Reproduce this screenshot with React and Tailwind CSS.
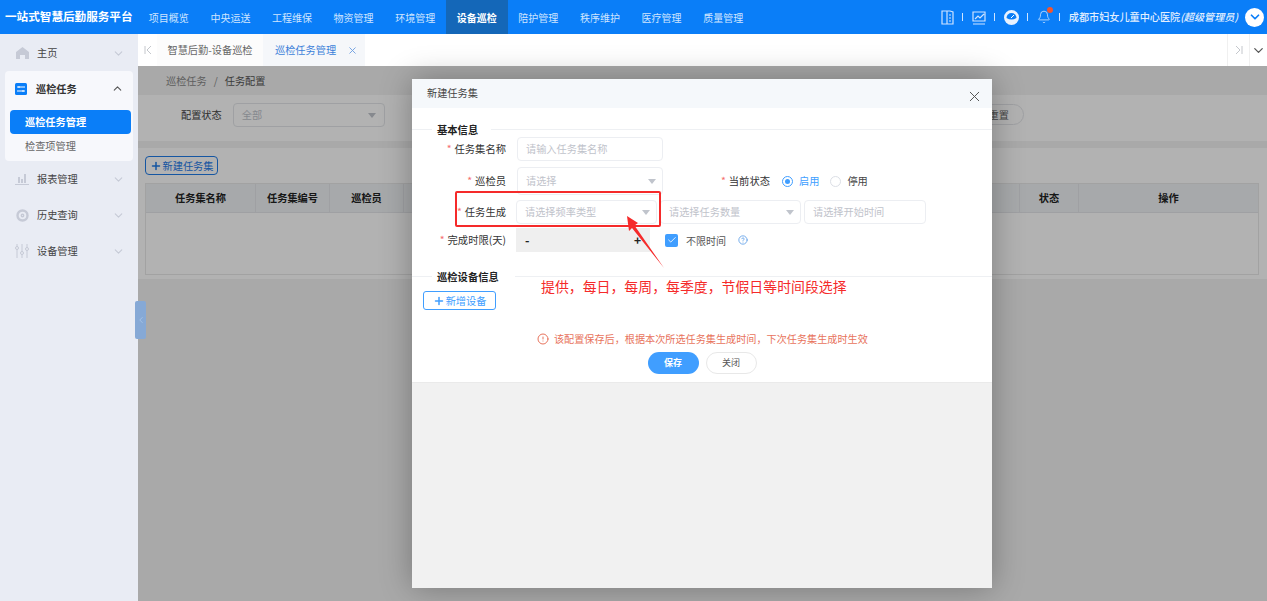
import { ChevronDown, ChevronUp, ChevronLeft, X, Plus, Check, CircleHelp, CircleAlert, Bell } from 'lucide-react';

const navItems = ['项目概览', '中央运送', '工程维保', '物资管理', '环境管理', '设备巡检', '陪护管理', '秩序维护', '医疗管理', '质量管理'];

const Caret = () => <span className="w-0 h-0 border-x-[4px] border-x-transparent border-t-[5px] border-t-[#c0c4cc]" />;

const Sep = () => <span className="ml-[8px] mr-[9px] w-px h-[8px] bg-[#cfe5ff]" />;

const Label = ({ children, w = 'w-[94px]' }) => (
    <div className={`${w} shrink-0 text-right text-[10.3px] text-[#333] whitespace-nowrap`}>
        <span className="text-[#f56c6c] mr-[3px]">*</span>
        {children}
    </div>
);

const Field = ({ text, w, caret, h = 'h-[24px]' }) => (
    <div className={`${w} ${h} flex items-center justify-between pl-2 pr-[6px] bg-white border border-[#eceef2] rounded-sm text-[10.2px] text-[#bfc3cb]`}>
        <span>{text}</span>
        {caret && <Caret />}
    </div>
);

const SideItem = ({ icon, text }) => (
    <div className="h-[36px] flex items-center pl-[15px] pr-[13px] text-[10.2px] text-[#444]">
        <span className="w-[14px] h-[14px] flex items-center justify-center text-[#c6cad6]">{icon}</span>
        <span className="ml-[8px] flex-1">{text}</span>
        <ChevronDown size={13} className="text-[#c6cad6]" />
    </div>
);

const Section = ({ title, w }) => (
    <div className="flex items-center h-[15px]">
        <div className="w-[20px] h-px bg-[#eef0f3]" />
        <div className={`${w} pl-[5px] text-[10.3px] font-bold text-[#222]`}>{title}</div>
        <div className="flex-1 h-px bg-[#eef0f3]" />
    </div>
);

export default function App() {
    return (
        <div className="relative w-[1267px] h-[601px] overflow-hidden bg-white font-['Noto_Sans_CJK_SC','Liberation_Sans',sans-serif]">
            <div className="h-[34px] bg-[#0a7ef8] flex items-center text-white">
                <div className="w-[138px] pl-[5px] text-[11.6px] font-bold whitespace-nowrap">一站式智慧后勤服务平台</div>
                <div className="flex h-full">
                    {navItems.map((item) => (
                        <div key={item} className={`w-[61.6px] flex items-center justify-center text-[10px] ${item === '设备巡检' ? 'bg-[#1467b8] font-bold' : 'text-[#cfe5ff]'}`}>{item}</div>
                    ))}
                </div>
                <div className="ml-auto flex items-center pr-[3px]">
                    <svg width="13" height="15" viewBox="0 0 13 15" fill="none" stroke="#cfe3ff" strokeWidth="1.2"><path d="M1 1h8l3 1v12H1zM6 1v13M8 5h2M8 8h2M8 11h2" /></svg>
                    <Sep />
                    <svg width="14" height="15" viewBox="0 0 14 15" fill="none" stroke="#cfe3ff" strokeWidth="1.2"><path d="M1 2h12v9H1zM1 14h12M3 9l3-3 2 2 4-4" /></svg>
                    <Sep />
                    <svg width="15" height="15" viewBox="0 0 15 15"><circle cx="7.5" cy="7.5" r="7.5" fill="#e8f2ff" /><path d="M2.5 8a5 5 0 1 1 10 0q-5 3 -10 0z" fill="#0a7ef8" /><path d="M7 8l3-3" stroke="#fff" /></svg>
                    <Sep />
                    <span className="relative">
                        <Bell size={14} strokeWidth={1.3} className="text-[#dbeafe]" />
                        <span className="absolute -top-[3px] -right-[2px] w-[6px] h-[6px] rounded-full bg-[#f4552c]" />
                    </span>
                    <Sep />
                    <span className="text-[10.15px] font-medium text-[#e2efff] whitespace-nowrap">成都市妇女儿童中心医院<i>(超级管理员)</i></span>
                    <span className="ml-[7px] w-[19px] h-[19px] rounded-full bg-white flex items-center justify-center">
                        <ChevronDown size={14} strokeWidth={3} className="text-[#0a7ef8]" />
                    </span>
                </div>
            </div>
            <div className="flex h-[567px]">
                <aside className="w-[138px] shrink-0 bg-[#e9ecf4] pt-px">
                    <SideItem text="主页" icon={<svg width="13" height="12" viewBox="0 0 13 12" fill="currentColor"><path d="M6.5 0L13 5v7H9V8H4v4H0V5z" /></svg>} />
                    <div className="ml-[5px] mr-[5px] bg-[#f7f8fc] rounded-sm h-[90px]">
                        <div className="h-[35px] flex items-center pl-[10px] pr-[9px] text-[10.2px] font-bold text-[#333]">
                            <svg width="12" height="12" viewBox="0 0 12 12"><rect width="12" height="12" rx="1.5" fill="#0a7ef8" /><path d="M2 4h8M2 8h8" stroke="#fff" /><path d="M4 3v2M8 7v2" stroke="#fff" /></svg>
                            <span className="ml-[9px] flex-1">巡检任务</span>
                            <ChevronUp size={13} className="text-[#555]" />
                        </div>
                        <div className="mt-[4px] ml-[5px] mr-[2px] h-[24px] bg-[#0a7ef8] rounded-sm flex items-center pl-[15px] text-[10.2px] font-bold text-white">巡检任务管理</div>
                        <div className="h-[23px] flex items-center pl-[20px] text-[10.2px] text-[#666]">检查项管理</div>
                    </div>
                    <SideItem text="报表管理" icon={<svg width="14" height="13" viewBox="0 0 14 13" fill="currentColor"><path d="M3 4h2v6H3zM6 6h2v4H6zM9 1h2v9H9zM0 11h14v1H0z" /></svg>} />
                    <SideItem text="历史查询" icon={<svg width="13" height="13" viewBox="0 0 13 13" fill="none" stroke="currentColor" strokeWidth="2.4"><circle cx="6.5" cy="6.5" r="5" /><circle cx="6.5" cy="6.5" r="1.2" strokeWidth="1.4" /></svg>} />
                    <SideItem text="设备管理" icon={<svg width="14" height="14" viewBox="0 0 14 14" fill="none" stroke="currentColor"><path d="M2 0v14M7 0v14M12 0v14" /><circle cx="2" cy="4" r="1.5" fill="#e9ecf4" /><circle cx="7" cy="9" r="1.5" fill="#e9ecf4" /><circle cx="12" cy="5" r="1.5" fill="#e9ecf4" /></svg>} />
                </aside>
                <main className="flex-1 flex flex-col min-w-0">
                    <div className="h-[32px] flex items-center bg-white text-[10.2px] shrink-0">
                        <div className="w-[19px] h-full flex items-center justify-center">
                            <svg width="8" height="8" viewBox="0 0 8 8" fill="none" stroke="#c4c7cc"><path d="M1 0v8M7 0L3 4l4 4" /></svg>
                        </div>
                        <div className="w-[106px] h-full bg-[#fcfcfc] flex items-center justify-center text-[#666]">智慧后勤-设备巡检</div>
                        <div className="w-[102px] h-full bg-[#f5f7fa] flex items-center pl-[12px] gap-[11px] text-[#3b7fd9]">巡检任务管理<X size={11} className="text-[#6f9fe0]" /></div>
                        <div className="ml-auto w-[22px] h-full border-l border-[#f0f0f0] flex items-center justify-center">
                            <svg width="8" height="8" viewBox="0 0 8 8" fill="none" stroke="#c4c7cc"><path d="M7 0v8M1 0l4 4-4 4" /></svg>
                        </div>
                        <div className="w-[18px] h-full border-l border-[#f0f0f0] flex items-center justify-center"><ChevronDown size={15} className="text-[#555]" /></div>
                    </div>
                    <div className="flex-1 bg-[#f2f2f2]">
                        <div className="h-[29px] flex items-center pl-[28px] text-[10.2px] text-[#888] gap-[7px]">巡检任务<span>/</span><span className="text-[#555]">任务配置</span></div>
                        <div className="h-[46px] bg-white flex items-start pt-[8px] pl-[43px] text-[10.2px] text-[#444]">
                            <span className="leading-[24px]">配置状态</span>
                            <div className="ml-[11px] w-[152px] h-[24px] border border-[#e4e6ea] rounded-sm flex items-center justify-between px-2 text-[#c0c4cc]">全部<Caret /></div>
                            <div className="ml-[589px] mt-px w-[50px] h-[21px] border border-[#e4e6ea] rounded-full flex items-center justify-center text-[#666]">重置</div>
                        </div>
                        <div className="h-[7px]" />
                        <div className="bg-white h-[131px] pl-[7px] pr-[8px] pt-[8px]">
                            <div className="w-[73px] h-[19px] border border-[#1f7be8] rounded-[4px] flex items-center justify-center gap-px text-[10.2px] text-[#1f7be8]"><Plus size={12} strokeWidth={3} />新建任务集</div>
                            <div className="mt-[8px] border border-[#e8e8e8] h-[92px]">
                                <div className="h-[29px] bg-[#eff2f5] border-b border-[#e4e6ea] flex text-[10.2px] font-bold text-[#222]">
                                    <div className="w-[110px] flex items-center justify-center border-r border-[#e4e6ea]">任务集名称</div>
                                    <div className="w-[74px] flex items-center justify-center border-r border-[#e4e6ea]">任务集编号</div>
                                    <div className="w-[74px] flex items-center justify-center border-r border-[#e4e6ea]">巡检员</div>
                                    <div className="flex-1 border-r border-[#e4e6ea]" />
                                    <div className="w-[59px] flex items-center justify-center border-r border-[#e4e6ea]">状态</div>
                                    <div className="w-[179px] flex items-center justify-center">操作</div>
                                </div>
                            </div>
                        </div>
                    </div>
                </main>
            </div>

            {/* 遮罩 */}
            <div className="absolute left-[138px] right-0 top-[66px] bottom-0 bg-black/30" />
            <div className="absolute left-[135px] top-[301px] w-[11px] h-[38px] bg-[#86a9d6] rounded-[2px] flex items-center justify-center"><ChevronLeft size={10} className="text-[#a9c6e8]" /></div>

            {/* 弹窗 */}
            <div className="absolute left-[412px] top-[79px] w-[580px] h-[509px] bg-[#f1f1f1] shadow-[0_0_30px_rgba(0,0,0,0.3)] flex flex-col">
                <div className="h-[29px] shrink-0 bg-[#f5f8fb] flex items-center justify-between pl-[15px] pr-[9px] text-[10.2px] text-[#444]">
                    <span className="-mt-[2px]">新建任务集</span>
                    <X size={17} strokeWidth={1.4} className="text-[#555] mt-[6px]" />
                </div>
                <div className="h-[275px] shrink-0 bg-white flex flex-col border-b border-[#eaeaea]">
                    <div className="pt-[14px]"><Section title="基本信息" w="w-[59px]" /></div>
                    <div className="flex items-center h-[24px]">
                        <Label>任务集名称</Label>
                        <div className="ml-[11px]"><Field w="w-[146px]" text="请输入任务集名称" /></div>
                    </div>
                    <div className="flex items-center mt-[6px] h-[28px]">
                        <Label>巡检员</Label>
                        <div className="ml-[11px]"><Field w="w-[146px]" h="h-[28px]" text="请选择" caret /></div>
                        <div className="ml-[53px] flex items-center text-[10.2px]">
                            <Label w="w-[54px]">当前状态</Label>
                            <span className="ml-[12px] w-[11px] h-[11px] rounded-full border border-[#409eff] flex items-center justify-center"><span className="w-[5px] h-[5px] rounded-full bg-[#409eff]" /></span>
                            <span className="ml-[6px] text-[#409eff]">启用</span>
                            <span className="ml-[11px] w-[11px] h-[11px] rounded-full border border-[#dcdfe6]" />
                            <span className="ml-[6px] text-[#444]">停用</span>
                        </div>
                    </div>
                    <div className="flex items-center mt-[5px] h-[24px]">
                        <Label>任务生成</Label>
                        <div className="ml-[10px] flex gap-[3px]">
                            <Field w="w-[141px]" text="请选择频率类型" caret />
                            <Field w="w-[141px]" text="请选择任务数量" caret />
                            <Field w="w-[122px]" text="请选择开始时间" />
                        </div>
                    </div>
                    <div className="flex items-center mt-[4px] h-[24px]">
                        <Label>完成时限(天)</Label>
                        <div className="ml-[10px] w-[134px] h-[24px] bg-[#efefef] flex items-center justify-between px-[9px] text-[12px] font-bold text-[#222]"><span>-</span><span>+</span></div>
                        <span className="ml-[15px] w-[13px] h-[13px] rounded-[2px] bg-[#409eff] flex items-center justify-center"><Check size={10} className="text-white" /></span>
                        <span className="ml-[8px] text-[10px] text-[#555]">不限时间</span>
                        <CircleHelp size={10} className="ml-[12px] text-[#5d9de8]" />
                    </div>
                    <div className="mt-[17px]"><Section title="巡检设备信息" w="w-[83px]" /></div>
                    <div className="ml-[11px] mt-[7px] w-[73px] h-[19px] border border-[#409eff] rounded-[3px] flex items-center justify-center gap-px text-[10.2px] text-[#409eff]"><Plus size={12} strokeWidth={3} />新增设备</div>
                    <div className="mt-[21px] flex items-center pl-[125px] text-[10.15px] text-[#e8735c] gap-[5px]"><CircleAlert size={12} />该配置保存后，根据本次所选任务集生成时间，下次任务集生成时生效</div>
                    <div className="mt-[6px] flex justify-center gap-[7px]">
                        <div className="w-[51px] h-[22px] rounded-full bg-[#409eff] flex items-center justify-center text-[9px] font-bold text-white">保存</div>
                        <div className="w-[51px] h-[22px] rounded-full border border-[#e8e8e8] flex items-center justify-center text-[9px] text-[#555]">关闭</div>
                    </div>
                </div>
            </div>

            {/* 标注 */}
            <div className="absolute left-[455px] top-[191px] w-[206px] h-[36px] border-2 border-[#f52a2a] rounded-[2px]" />
            <svg className="absolute left-[620px] top-[210px]" width="50" height="65" viewBox="0 0 50 65">
                <path d="M7 6L18 13L14.5 15.5L44 58L12 18L9 21z" fill="#f52a2a" />
            </svg>
            <div className="absolute left-[541px] top-[276px] text-[13.9px] text-[#f52a2a] whitespace-nowrap">提供，每日，每周，每季度，节假日等时间段选择</div>
        </div>
    );
}
